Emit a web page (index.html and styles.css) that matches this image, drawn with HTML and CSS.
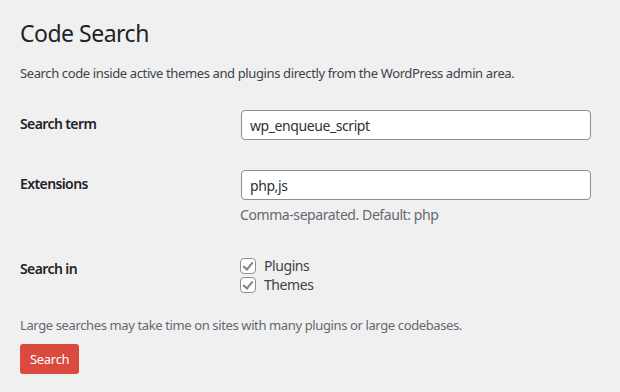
FILE: index.html
```html
<!DOCTYPE html>
<html>
<head>
    <meta charset="UTF-8">
    <title>Code Search</title>
    <link rel="stylesheet" href="styles.css">
</head>
<body>
    <div class="wrap">
        <h1 class="page-title">Code Search</h1>
        <p class="intro">Search code inside active themes and plugins directly from the WordPress admin area.</p>

        <form class="search-form">
            <div class="form-row">
                <label class="row-label" for="term">Search term</label>
                <div class="row-field">
                    <input class="text-input" type="text" id="term" value="wp_enqueue_script">
                </div>
            </div>

            <div class="form-row">
                <label class="row-label" for="ext">Extensions</label>
                <div class="row-field">
                    <input class="text-input" type="text" id="ext" value="php,js">
                    <p class="description">Comma-separated. Default: php</p>
                </div>
            </div>

            <div class="form-row form-row-checks">
                <div class="row-label">Search in</div>
                <div class="row-field">
                    <label class="check-line"><input class="check" type="checkbox" checked> Plugins</label>
                    <label class="check-line"><input class="check" type="checkbox" checked> Themes</label>
                </div>
            </div>

            <p class="note">Large searches may take time on sites with many plugins or large codebases.</p>

            <button class="button-search" type="button">Search</button>
        </form>
    </div>
</body>
</html>
```

FILE: styles.css
```css
body {
    margin: 0;
    background-color: #f0f0f1;
    color: #3c434a;
    font-family: "Noto Sans", "Open Sans", sans-serif;
    font-size: 13px;
    letter-spacing: -0.38px;
}

.wrap {
    padding: 10px 20px 0 20px;
}

.page-title {
    font-size: 23px;
    font-weight: 400;
    line-height: 1.3;
    color: #1d2327;
    margin: 0;
    padding: 9px 0 4px 0;
    letter-spacing: -0.5px;
}

.intro {
    margin: 11px 0 0 0;
    line-height: 1.5;
}

.search-form {
    margin-top: 12px;
}

.form-row {
    display: flex;
    align-items: flex-start;
}

.row-label {
    width: 200px;
    flex-shrink: 0;
    padding: 20px 10px 20px 0;
    font-size: 14px;
    font-weight: 600;
    line-height: 1.3;
    color: #1d2327;
    letter-spacing: -0.6px;
}

.row-field {
    padding: 15px 10px;
    font-size: 14px;
    letter-spacing: -0.42px;
}

.text-input {
    display: block;
    box-sizing: border-box;
    width: 350px;
    height: 30px;
    margin: 0 0 0 1px;
    padding: 0 8px;
    border: 1px solid #8c8f94;
    border-radius: 4px;
    background: #fff;
    color: #2c3338;
    font-family: inherit;
    font-size: 14px;
    letter-spacing: -0.42px;
    outline: none;
}

.description {
    margin: 4px 0 0 0;
    color: #646970;
    font-size: 14px;
    line-height: 1.5;
}

.form-row-checks .row-field {
    padding-top: 16px;
    padding-bottom: 14px;
}

.check-line {
    display: flex;
    align-items: center;
    height: 19px;
    color: #3c434a;
}

.check {
    -webkit-appearance: none;
    appearance: none;
    position: relative;
    width: 16px;
    height: 16px;
    margin: 0 8px 0 0;
    border: 1px solid #8c8f94;
    border-radius: 4px;
    background: #fff;
    box-sizing: border-box;
}

.check:checked::before {
    content: "";
    position: absolute;
    left: 4px;
    top: 1px;
    width: 4px;
    height: 8px;
    border-right: 2px solid #7c848c;
    border-bottom: 2px solid #7c848c;
    transform: rotate(40deg);
}

.note {
    margin: 8px 0 0 0;
    line-height: 1.5;
    color: #646970;
}

.button-search {
    margin-top: 8px;
    height: 30px;
    padding: 0 10px;
    border: none;
    border-radius: 3px;
    background-color: #db4a3f;
    color: #fff;
    font-family: inherit;
    font-size: 13px;
    letter-spacing: -0.3px;
}
```
